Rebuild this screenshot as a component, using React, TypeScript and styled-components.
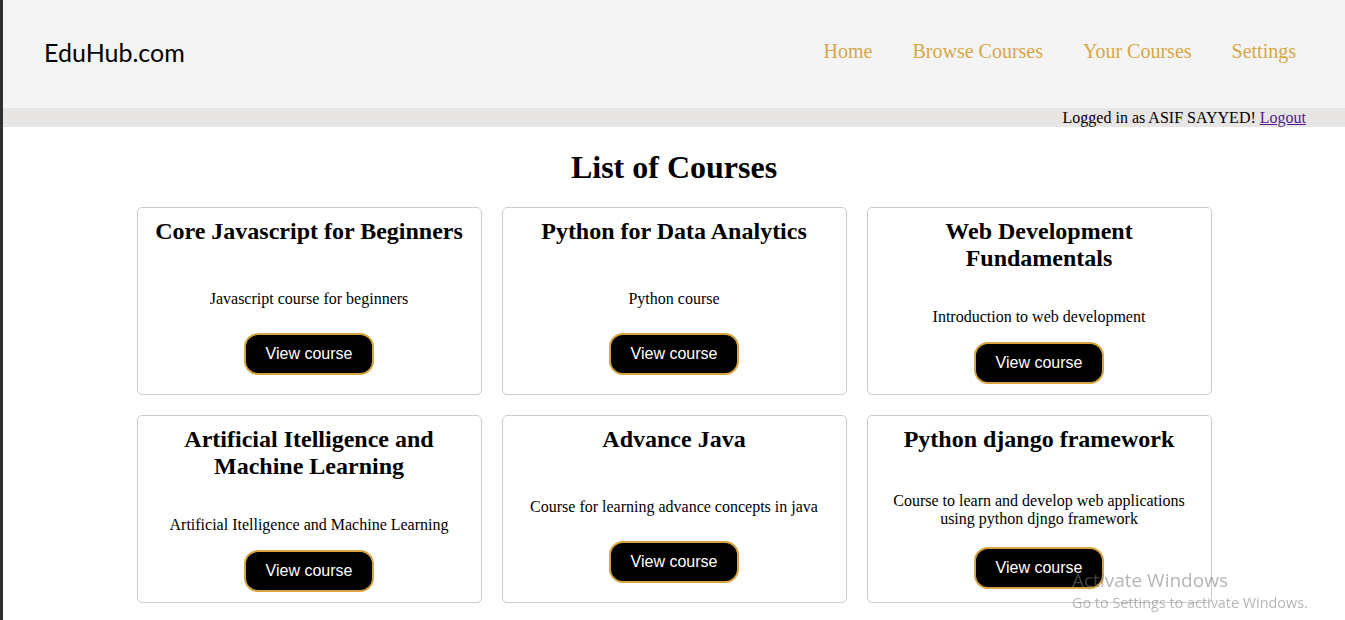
import React from "react";
import styled, { createGlobalStyle } from "styled-components";

const GlobalStyle = createGlobalStyle`
  html, body {
    margin: 0;
    padding: 0;
    background: #ffffff;
  }
  body {
    font-family: "Liberation Serif", "Times New Roman", serif;
    font-size: 16px;
    color: #000;
  }
`;

const Page = styled.div`
  min-height: 620px;
  border-left: 3px solid #2e2e2e;
  background: #ffffff;
`;

const Header = styled.header`
  height: 108px;
  background: #f4f4f4;
  display: flex;
  align-items: center;
  justify-content: space-between;
  padding: 0 49px 0 41px;
`;

const Logo = styled.div`
  font-family: Lato, "Open Sans", sans-serif;
  font-size: 25px;
  color: #000;
  margin-bottom: 4px;
`;

const Nav = styled.nav`
  display: flex;
  gap: 40px;
  align-items: center;
  margin-bottom: 6px;
`;

const NavLink = styled.a`
  font-family: "Liberation Serif", "Times New Roman", serif;
  font-size: 20px;
  color: #d6a747;
  text-decoration: none;
`;

const StatusBar = styled.div`
  height: 19px;
  background: #e8e6e5;
  display: flex;
  justify-content: flex-end;
  align-items: center;
  padding-right: 39px;
  font-size: 16px;
  line-height: 19px;
`;

const LogoutLink = styled.a`
  color: #551a8b;
  text-decoration: underline;
  margin-left: 4px;
`;

const Title = styled.h1`
  font-size: 32px;
  font-weight: bold;
  text-align: center;
  margin: 22px 0 21px;
`;

const Grid = styled.div`
  width: 1075px;
  margin: 0 auto;
  display: grid;
  grid-template-columns: repeat(3, 1fr);
  gap: 20px;
`;

const Card = styled.div`
  border: 1px solid #cccccc;
  border-radius: 5px;
  padding: 10px 15px;
  display: flex;
  flex-direction: column;
  text-align: center;
`;

const CardTitle = styled.h2`
  font-size: 24px;
  font-weight: bold;
  margin: 0 0 20px;
`;

const CardBody = styled.div`
  flex: 1;
  display: flex;
  flex-direction: column;
  align-items: center;
  justify-content: space-evenly;
`;

const Description = styled.p`
  font-size: 16px;
  margin: 16px 0;
`;

const ViewButton = styled.button`
  font-family: "Liberation Sans", Arial, sans-serif;
  font-size: 16px;
  color: #ffffff;
  background: #000000;
  border: 2px solid #d4a540;
  border-radius: 14px;
  padding: 10px 20px;
  cursor: pointer;
`;

const Watermark = styled.div`
  position: fixed;
  left: 1072px;
  top: 567px;
  font-family: "Open Sans", "Noto Sans", sans-serif;
  color: rgba(120, 120, 120, 0.55);
  pointer-events: none;
`;

const WatermarkTitle = styled.div`
  font-size: 19px;
  line-height: 26px;
`;

const WatermarkSub = styled.div`
  font-size: 14.4px;
  line-height: 20px;
`;

const courses = [
  { title: "Core Javascript for Beginners", desc: "Javascript course for beginners" },
  { title: "Python for Data Analytics", desc: "Python course" },
  { title: "Web Development Fundamentals", desc: "Introduction to web development" },
  { title: "Artificial Itelligence and Machine Learning", desc: "Artificial Itelligence and Machine Learning" },
  { title: "Advance Java", desc: "Course for learning advance concepts in java" },
  { title: "Python django framework", desc: "Course to learn and develop web applications using python djngo framework" },
];

export default function App() {
  return (
    <>
      <GlobalStyle />
      <Page>
        <Header>
          <Logo>EduHub.com</Logo>
          <Nav>
            <NavLink href="#">Home</NavLink>
            <NavLink href="#">Browse Courses</NavLink>
            <NavLink href="#">Your Courses</NavLink>
            <NavLink href="#">Settings</NavLink>
          </Nav>
        </Header>
        <StatusBar>
          Logged in as ASIF SAYYED! <LogoutLink href="#">Logout</LogoutLink>
        </StatusBar>
        <Title>List of Courses</Title>
        <Grid>
          {courses.map((c) => (
            <Card key={c.title}>
              <CardTitle>{c.title}</CardTitle>
              <CardBody>
                <Description>{c.desc}</Description>
                <ViewButton>View course</ViewButton>
              </CardBody>
            </Card>
          ))}
        </Grid>
      </Page>
      <Watermark>
        <WatermarkTitle>Activate Windows</WatermarkTitle>
        <WatermarkSub>Go to Settings to activate Windows.</WatermarkSub>
      </Watermark>
    </>
  );
}
